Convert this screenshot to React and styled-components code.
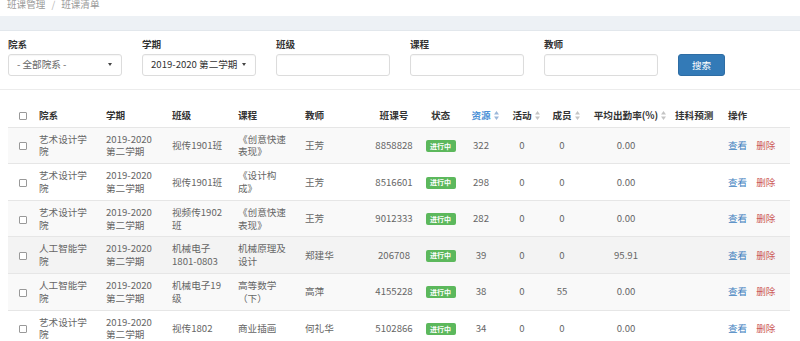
import React from "react";
import styled, { createGlobalStyle } from "styled-components";

const GlobalStyle = createGlobalStyle`
  html, body { margin: 0; padding: 0; background: #fff; }
  body {
    font-family: "Noto Sans CJK SC", "Noto Sans", sans-serif;
    font-size: 9.6px;
    line-height: 12.8px;
    color: #555;
    text-spacing-trim: space-all;
  }
  * { box-sizing: border-box; }
`;

const Page = styled.div`
  width: 800px;
  overflow: hidden;
`;

const Breadcrumb = styled.div`
  height: 16px;
  padding-left: 7px;
  line-height: 8px;
  color: #9a9a9a;
  display: flex;
  align-items: flex-start;
`;

const Sep = styled.span`
  padding: 0 6px;
  color: #b5b5b5;
`;

const Band = styled.div`
  height: 15px;
  background: #edf1f5;
  border-bottom: 1px solid #e2e7ec;
`;

const FilterPanel = styled.div`
  display: flex;
  align-items: flex-end;
  gap: 20px;
  padding: 7px 0 13px 8px;
  border-bottom: 1px solid #ececec;
`;

const FilterItem = styled.div`
  width: 114px;
  display: flex;
  flex-direction: column;
  gap: 3px;
`;

const Label = styled.div`
  font-weight: bold;
  color: #333;
  line-height: 12.8px;
`;

const fieldBase = `
  height: 22px;
  border: 1px solid #dcdcdc;
  border-radius: 3px;
  box-shadow: inset 0 1px 1px rgba(0,0,0,0.04);
  background: #fff;
`;

const Select = styled.div`
  ${fieldBase}
  display: flex;
  align-items: center;
  justify-content: space-between;
  padding: 0 9px 0 8px;
  color: ${(p) => (p.$muted ? "#666" : "#333")};
  white-space: nowrap;
`;

const Caret = styled.span`
  width: 0;
  height: 0;
  border-left: 2.5px solid transparent;
  border-right: 2.5px solid transparent;
  border-top: 3px solid #444;
`;

const Input = styled.div`
  ${fieldBase}
`;

const SearchButton = styled.button`
  width: 47px;
  height: 22px;
  border: 1px solid #2e6da4;
  border-radius: 3px;
  background: #337ab7;
  color: #fff;
  font-family: inherit;
  font-size: 9.6px;
  padding: 0;
`;

const TableWrap = styled.div`
  padding: 14px 10px 0 8px;
`;

const Table = styled.table`
  width: 782px;
  table-layout: fixed;
  border-collapse: collapse;
`;

const Th = styled.th`
  font-weight: bold;
  color: ${(p) => (p.$active ? "#4a8fd6" : "#333")};
  text-align: ${(p) => p.$align || "left"};
  padding: ${(p) => (p.$align === "center" ? "5px 2px" : "5px 4px")};
  padding-left: ${(p) => (p.$pl != null ? `${p.$pl}px` : undefined)};
  line-height: 12.8px;
  vertical-align: middle;
  white-space: nowrap;
  border-bottom: 1px solid #e6e6e6;
`;

const Tr = styled.tr`
  background: ${(p) => (p.$hover ? "#f3f3f3" : p.$striped ? "#f9f9f9" : "#fff")};
`;

const Td = styled.td`
  text-align: ${(p) => p.$align || "left"};
  padding: ${(p) => (p.$align === "center" ? "5px 2px" : "5px 8px 5px 4px")};
  padding-left: ${(p) => (p.$pl != null ? `${p.$pl}px` : undefined)};
  line-height: 12.8px;
  vertical-align: middle;
  border-top: 1px solid #e6e6e6;
  color: #666;
`;

const Checkbox = styled.span`
  display: inline-block;
  width: 8px;
  height: 8px;
  border: 1px solid #999;
  border-radius: 1px;
  background: #fff;
  vertical-align: middle;
`;

const Badge = styled.span`
  display: inline-block;
  background: #5cb85c;
  color: #fff;
  font-size: 7px;
  line-height: 9px;
  padding: 1.5px 4.5px;
  border-radius: 2px;
  font-weight: bold;
  vertical-align: middle;
`;

const SortWrap = styled.span`
  display: inline-block;
  margin-left: 3px;
  margin-right: -8px;
  vertical-align: -1px;
  line-height: 0;
`;

const Link = styled.a`
  color: ${(p) => (p.$danger ? "#cc5a57" : "#3f7fbf")};
  text-decoration: none;
  margin-right: ${(p) => (p.$danger ? "0" : "9px")};
  cursor: pointer;
`;

const SortIcon = ({ active }) => (
  <SortWrap>
    <svg width="5" height="9" viewBox="0 0 5 9">
      <polygon points="2.5,0 5,3.5 0,3.5" fill={active ? "#9bb7d9" : "#c4c4c4"} />
      <polygon points="0,5.5 5,5.5 2.5,9" fill={active ? "#9bb7d9" : "#c4c4c4"} />
    </svg>
  </SortWrap>
);

const widths = [27, 67, 66, 66, 67, 67, 52, 41, 40, 42, 38, 90, 53, 66];

const headers = [
  { key: "cb" },
  { label: "院系" },
  { label: "学期" },
  { label: "班级" },
  { label: "课程" },
  { label: "教师" },
  { label: "班课号", align: "center" },
  { label: "状态", align: "center" },
  { label: "资源", align: "center", sort: true, active: true },
  { label: "活动", align: "center", sort: true },
  { label: "成员", align: "center", sort: true },
  { label: "平均出勤率(%)", align: "center", sort: true },
  { label: "挂科预测" },
  { label: "操作" },
];

const rows = [
  ["艺术设计学院", "视传1901班", "《创意快速表现》", "王芳", "8858828", "322", "0", "0", "0.00"],
  ["艺术设计学院", "视传1901班", "《设计构成》", "王芳", "8516601", "298", "0", "0", "0.00"],
  ["艺术设计学院", "视频传1902班", "《创意快速表现》", "王芳", "9012333", "282", "0", "0", "0.00"],
  ["人工智能学院", "机械电子1801-0803", "机械原理及设计", "郑建华", "206708", "39", "0", "0", "95.91"],
  ["人工智能学院", "机械电子19级", "高等数学（下）", "高萍", "4155228", "38", "0", "55", "0.00"],
  ["艺术设计学院", "视传1802", "商业插画", "何礼华", "5102866", "34", "0", "0", "0.00"],
];

export default function App() {
  return (
    <Page>
      <GlobalStyle />
      <Breadcrumb>
        <span>班课管理</span>
        <Sep>/</Sep>
        <span>班课清单</span>
      </Breadcrumb>
      <Band />
      <FilterPanel>
        <FilterItem>
          <Label>院系</Label>
          <Select $muted>
            <span>- 全部院系 -</span>
            <Caret />
          </Select>
        </FilterItem>
        <FilterItem>
          <Label>学期</Label>
          <Select>
            <span>2019-2020 第二学期</span>
            <Caret />
          </Select>
        </FilterItem>
        <FilterItem>
          <Label>班级</Label>
          <Input />
        </FilterItem>
        <FilterItem>
          <Label>课程</Label>
          <Input />
        </FilterItem>
        <FilterItem>
          <Label>教师</Label>
          <Input />
        </FilterItem>
        <SearchButton>搜索</SearchButton>
      </FilterPanel>
      <TableWrap>
        <Table>
          <colgroup>
            {widths.map((w, i) => (
              <col key={i} style={{ width: w }} />
            ))}
          </colgroup>
          <thead>
            <tr>
              {headers.map((h, i) =>
                i === 0 ? (
                  <Th key={i} $pl={11}>
                    <Checkbox />
                  </Th>
                ) : (
                  <Th key={i} $align={h.align} $active={h.active}>
                    {h.label}
                    {h.sort && <SortIcon active={h.active} />}
                  </Th>
                )
              )}
            </tr>
          </thead>
          <tbody>
            {rows.map((r, i) => (
              <Tr key={i} $striped={i % 2 === 0} $hover={i === 3}>
                <Td $pl={11}>
                  <Checkbox />
                </Td>
                <Td>{r[0]}</Td>
                <Td>2019-2020 第二学期</Td>
                <Td>{r[1]}</Td>
                <Td>{r[2]}</Td>
                <Td>{r[3]}</Td>
                <Td $align="center">{r[4]}</Td>
                <Td $align="center">
                  <Badge>进行中</Badge>
                </Td>
                <Td $align="center">{r[5]}</Td>
                <Td $align="center">{r[6]}</Td>
                <Td $align="center">{r[7]}</Td>
                <Td $align="center">{r[8]}</Td>
                <Td />
                <Td>
                  <Link>查看</Link>
                  <Link $danger>删除</Link>
                </Td>
              </Tr>
            ))}
          </tbody>
        </Table>
      </TableWrap>
    </Page>
  );
}
